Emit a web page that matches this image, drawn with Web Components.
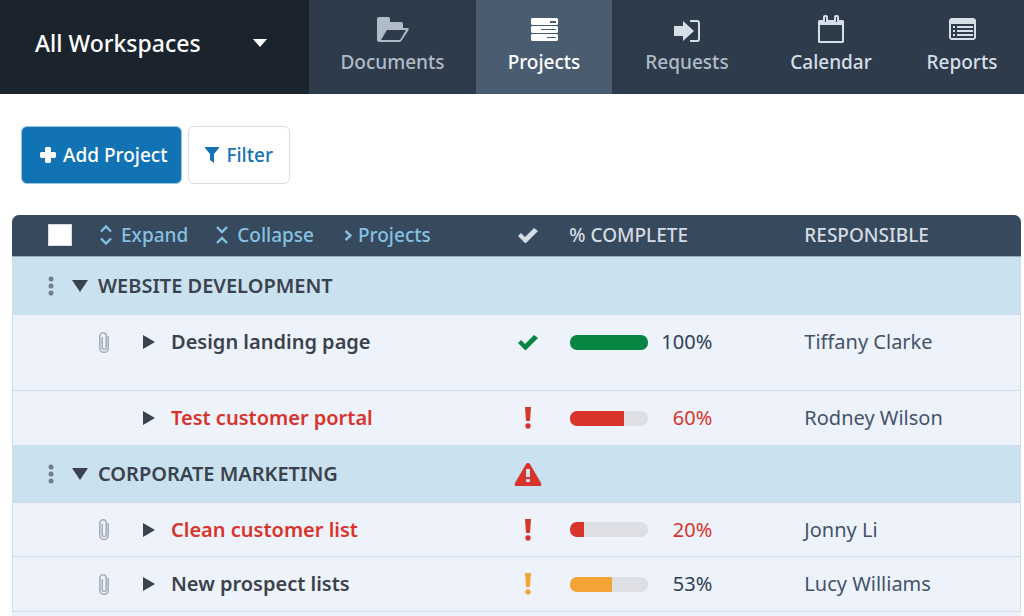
<!DOCTYPE html>
<html lang="en">
<head>
<meta charset="utf-8">
<title>Projects</title>
<style>
  body { display: flex; flex-direction: column; min-height: 100vh; margin: 0; background: #fff; font-family: "Noto Sans", "Open Sans", sans-serif; }
  main { display: flex; flex: 1; flex-direction: column; }
  project-table { flex: 1; }
</style>
</head>
<body>
<app-header></app-header>
<main>
  <project-toolbar></project-toolbar>
  <project-table></project-table>
</main>

<script>
const ICONS = {
  caret: [14, 8, '<path d="M0 0h14L7 8z"/>'],
  folder: [32, 25, '<path fill-rule="evenodd" d="M2 0h9q2 0 2 2v3h11q2 0 2 2v4h4q3 0 1 3l-6 9q-1 2-3 2H2q-2 0-2-2V2Q0 0 2 0zM10 13L4 23h19l6-10z"/>'],
  stack: [27, 23, '<path fill-rule="evenodd" d="M1 0h25l1 1v5l-1 1H1L0 6V1zM19 3v2h6V3zM1 8h25l1 1v5l-1 1H1l-1-1V9zM10 11v1h15v-1zM1 16h25l1 1v5l-1 1H1l-1-1v-5zM16 19v1h9v-1z"/>'],
  request: [26, 28, '<g fill="#d5dfe8" stroke="#d5dfe8"><path stroke="none" d="M0 11h9V6l11 10-11 10v-5H0z"/><path d="M16 6h7q2 0 2 2v16q0 2-2 2h-7" fill="none" stroke-width="2"/></g>'],
  calendar: [26, 28, '<path fill-rule="evenodd" d="M1 5h4V2q0-2 2-2h1q2 0 2 2v3h6V2q0-2 2-2h1q2 0 2 2v3h4l1 1v21l-1 1H1l-1-1V6zM7 2v5h1V2zM18 2v5h1V2zM2 10v16h22V10z"/>'],
  report: [27, 22, '<path fill-rule="evenodd" d="M2 0h23l2 2v18l-2 2H2l-2-2V2zM2 6v14h23V6z"/><path d="M4 8h2v2H4zM8 8h16v2H8zM4 12h2v2H4zM8 12h16v2H8zM4 16h2v2H4zM8 16h16v2H8z"/>'],
  plus: [16, 16, '<path d="M6 0h4l1 1v4h4l1 1v4l-1 1h-4v4l-1 1H6l-1-1v-4H1l-1-1V6l1-1h4V1z"/>'],
  funnel: [14, 16, '<path d="M0 0h14v1L9 7v9l-4-3V7L0 1z"/>'],
  expand: [12, 20, '<path d="M1 6.500l5-5 5 5M1 13.500l5 5 5-5" fill="none" stroke="currentColor" stroke-width="2.400"/>'],
  collapse: [12, 18, '<path d="M1 1l5 5 5-5M1 17l5-5 5 5" fill="none" stroke="currentColor" stroke-width="2.400"/>'],
  chevron: [8, 11, '<path d="M1.500 1l5 4.500-5 4.500" fill="none" stroke="currentColor" stroke-width="2.400"/>'],
  check: [20, 15, '<path d="M0 8l3-3 4 4 9-9 4 3L8 15H7z"/>'],
  dots: [6, 20, '<circle cx="3" cy="3" r="2.500"/><circle cx="3" cy="10" r="2.500"/><circle cx="3" cy="17" r="2.500"/>'],
  down: [16, 12, '<path d="M0 0h16L8 12z"/>'],
  right: [12, 14, '<path d="M0 0l12 7-12 7z"/>'],
  clip: [10, 21, '<path d="M9.200 4v12.200a4.200 4.200 0 0 1-8.400 0V4a3.200 3.200 0 0 1 6.400 0v11.500a2 2 0 0 1-4 0V5" fill="none" stroke="currentColor" stroke-width="1.600"/>'],
  alert: [6, 22, '<path d="M0 0h6l-1 14H1z"/><circle cx="3" cy="19" r="2.700"/>'],
  warning: [28, 23, '<path fill-rule="evenodd" d="M14 0q1 0 2 1l11 19q1 3-1 3H2q-2 0-1-3L12 1q1-1 2-1zM12 6v8h4V6zM12 16v3h4v-3z"/>']
};

class UiIcon extends HTMLElement {
  connectedCallback() {
    const [w, h, art] = ICONS[this.getAttribute('name')];
    const root = this.shadowRoot || this.attachShadow({ mode: 'open' });
    root.innerHTML = `<style>:host { display: inline-block; flex: none; } svg { display: block; fill: currentColor; }</style>
      <svg width="${w}" height="${h}" viewBox="0 0 ${w} ${h}" aria-hidden="true">${art}</svg>`;
  }
}

class NavItem extends HTMLElement {
  constructor() {
    super();
    this.attachShadow({ mode: 'open' });
  }
  connectedCallback() {
    this.shadowRoot.innerHTML = `<style>
      :host { display: block; color: #afbbc6; }
      :host([active]) { color: #fff; background: #4a5d70; }
      :host([bright]) { color: #d5dfe8; }
      a { display: flex; flex-direction: column; align-items: center; box-sizing: border-box; height: 100%;
          padding-top: 14px; color: inherit; text-decoration: none; font-size: 19px; line-height: 28px; font-weight: 500; }
      span { display: flex; align-items: center; justify-content: center; height: 30px; margin-bottom: 4px; }
    </style>
    <a href="#"><span><ui-icon name="${this.getAttribute('icon')}"></ui-icon></span><slot></slot></a>`;
  }
}

class AppHeader extends HTMLElement {
  constructor() {
    super();
    this.attachShadow({ mode: 'open' }).innerHTML = `<style>
      :host { display: block; background: #2d3b4b; }
      header, nav { display: grid; }
      header { grid-template-columns: 309fr 715fr; height: 94px; }
      nav { grid-template-columns: 167fr 136fr 150fr 138fr 124fr; }
      button { display: flex; align-items: center; justify-content: space-between; border: 0; margin: 0;
               padding: 0 42px 8px 35px; background: #1b242d; color: #fff; font: 500 23px/32px "Noto Sans", "Open Sans", sans-serif; }
    </style>
    <header>
      <button type="button">All Workspaces <ui-icon name="caret"></ui-icon></button>
      <nav>
        <nav-item icon="folder">Documents</nav-item>
        <nav-item icon="stack" active>Projects</nav-item>
        <nav-item icon="request">Requests</nav-item>
        <nav-item icon="calendar" bright>Calendar</nav-item>
        <nav-item icon="report" bright>Reports</nav-item>
      </nav>
    </header>`;
  }
}

class ActionButton extends HTMLElement {
  constructor() {
    super();
    this.attachShadow({ mode: 'open' });
  }
  connectedCallback() {
    this.shadowRoot.innerHTML = `<style>
      :host { display: block; }
      button { display: flex; align-items: center; gap: 7px; height: 58px; padding: 0 16px; border: 1px solid #dcdce6;
               border-radius: 6px; background: #fff; color: #1473b4; font: 500 19px/28px "Noto Sans", "Open Sans", sans-serif; }
      :host([primary]) button { padding: 0 14px 0 18px; border-color: #9cc4e0; background: #1173b4; color: #fff; }
    </style>
    <button type="button"><ui-icon name="${this.getAttribute('icon')}"></ui-icon><slot></slot></button>`;
  }
}

class ProjectToolbar extends HTMLElement {
  constructor() {
    super();
    this.attachShadow({ mode: 'open' }).innerHTML = `<style>
      :host { display: flex; gap: 6px; padding: 32px 21px 31px; }
    </style>
    <action-button icon="plus" primary>Add Project</action-button>
    <action-button icon="funnel">Filter</action-button>`;
  }
}

class ProgressMeter extends HTMLElement {
  constructor() {
    super();
    this.attachShadow({ mode: 'open' });
  }
  connectedCallback() {
    const value = this.getAttribute('value');
    this.shadowRoot.innerHTML = `<style>
      :host { display: flex; align-items: center; }
      progress { appearance: none; display: block; width: 78px; height: 15px; border: 0; border-radius: 7px; overflow: hidden; background: #dedfe4; }
      progress::-webkit-progress-bar { background: #dedfe4; }
      progress::-webkit-progress-value { background: var(--bar); }
      label { display: contents; }
      span { width: 64px; text-align: right; }
    </style>
    <label><progress max="100" value="${this.getAttribute('fill')}"></progress><span>${value}%</span></label>`;
  }
}

const groupRow = (name, status) => `
  <tr class="group">
    <th scope="rowgroup"><div class="name">
      <button type="button" class="menu" aria-label="Group menu"><ui-icon name="dots"></ui-icon></button>
      <button type="button" class="toggle" aria-label="Collapse group"><ui-icon name="down"></ui-icon></button>${name}
    </div></th>
    <td class="status late">${status ? `<ui-icon name="${status}"></ui-icon>` : ''}</td><td></td><td></td>
  </tr>`;

const taskRow = t => `
  <tr class="task ${t.kind || ''}">
    <th scope="row"><div class="name">
      <span class="clip">${t.clip ? '<ui-icon name="clip"></ui-icon>' : ''}</span>
      <button type="button" class="toggle" aria-label="Expand task"><ui-icon name="right"></ui-icon></button>
      <span class="title">${t.name}</span>
    </div></th>
    <td class="status"><ui-icon name="${t.status}"></ui-icon></td>
    <td><progress-meter value="${t.value}" fill="${t.fill}"></progress-meter></td>
    <td class="person">${t.person}</td>
  </tr>`;

class ProjectTable extends HTMLElement {
  constructor() {
    super();
    this.attachShadow({ mode: 'open' }).innerHTML = `<style>
      :host { display: block; margin: 0 3px 0 12px; border-radius: 7px 7px 0 0; background: #eef2fa; color: #3a424d; }
      table { width: 100%; table-layout: fixed; border-collapse: separate; border-spacing: 0; font-size: 20px; line-height: 28px; }
      th, td { box-sizing: border-box; padding: 0; text-align: left; font-weight: 400; }
      .c-name { width: 48%; } .c-status { width: 64px; } .c-done { width: 234px; }
      thead th { height: 42px; padding-bottom: 1px; background: #37495c; color: #d5dce4; font-size: 19px; font-weight: 500; border-bottom: 1px solid #9aabb9; }
      thead th:first-child { border-top-left-radius: 7px; }
      thead th:last-child { border-top-right-radius: 7px; }
      .tools { display: flex; align-items: center; padding-left: 36px; }
      .tools button { display: flex; align-items: center; gap: 9px; color: #85c1e3; font-size: 19px; line-height: 28px; font-weight: 500; }
      .tools .expand { margin: 0 28px 0 28px; }
      .tools .crumb { gap: 6px; margin-left: 30px; }
      input { appearance: none; flex: none; width: 24px; height: 22px; margin: 0; background: #fff; border: 1px solid #d9dce6; }
      button { display: flex; border: 0; margin: 0; padding: 0; background: none; color: inherit; font-family: inherit; }
      tbody th, tbody td { border-bottom: 1px solid #cddce6; background: #eef2fa; }
      tbody th { border-left: 1px solid #cddfe9; }
      tbody td:last-child { border-right: 1px solid #cddfe9; }
      .group th, .group td { height: 57px; background: #cae2ef; }
      .group:first-child th, .group:first-child td { height: 58px; }
      .task th, .task td { height: 54px; }
      .roomy th, .roomy td { height: 76px; padding-bottom: 21px; }
      .roomy + .task th, .roomy + .task td, .task:last-child th, .task:last-child td { height: 55px; }
      .name { display: flex; align-items: center; font-weight: 600; }
      .menu { margin-left: 35px; color: #747d8b; }
      .group .toggle { margin: 0 10px 0 18px; }
      .clip { display: flex; width: 10px; margin-left: 86px; color: #a9afbb; }
      .task .toggle { margin: 0 16px 0 34px; }
      .status { text-align: center; }
      .status ui-icon { display: block; width: max-content; margin: 0 auto; }
      .done { --bar: #078542; } .done .status { color: #078542; }
      .late { --bar: #d9342b; color: #d9342b; }
      .late .title, .late progress-meter { color: #d9342b; }
      .late .toggle { color: #3a424d; }
      .soon { --bar: #f2a536; } .soon .status { color: #f2a536; }
      progress-meter { padding-left: 10px; color: #2c4056; }
      .person, .c-head-person { padding-left: 10px; }
      .c-head-done { padding-left: 9px; }
      .late .person, .person { color: #43536a; }
    </style>
    <table>
      <colgroup><col class="c-name"><col class="c-status"><col class="c-done"><col></colgroup>
      <thead><tr>
        <th><div class="tools">
          <input type="checkbox" aria-label="Select all">
          <button type="button" class="expand"><ui-icon name="expand"></ui-icon>Expand</button>
          <button type="button"><ui-icon name="collapse"></ui-icon>Collapse</button>
          <button type="button" class="crumb"><ui-icon name="chevron"></ui-icon>Projects</button>
        </div></th>
        <th class="status"><ui-icon name="check"></ui-icon></th>
        <th class="c-head-done">% COMPLETE</th>
        <th class="c-head-person">RESPONSIBLE</th>
      </tr></thead>
      <tbody>
        ${groupRow('WEBSITE DEVELOPMENT')}
        ${taskRow({ name: 'Design landing page', clip: true, status: 'check', value: 100, fill: 100, person: 'Tiffany Clarke', kind: 'done roomy' })}
        ${taskRow({ name: 'Test customer portal', status: 'alert', value: 60, fill: 69, person: 'Rodney Wilson', kind: 'late' })}
        ${groupRow('CORPORATE MARKETING', 'warning')}
        ${taskRow({ name: 'Clean customer list', clip: true, status: 'alert', value: 20, fill: 18, person: 'Jonny Li', kind: 'late' })}
        ${taskRow({ name: 'New prospect lists', clip: true, status: 'alert', value: 53, fill: 54, person: 'Lucy Williams', kind: 'soon' })}
      </tbody>
    </table>`;
  }
}

customElements.define('ui-icon', UiIcon);
customElements.define('nav-item', NavItem);
customElements.define('app-header', AppHeader);
customElements.define('action-button', ActionButton);
customElements.define('project-toolbar', ProjectToolbar);
customElements.define('progress-meter', ProgressMeter);
customElements.define('project-table', ProjectTable);
</script>
</body>
</html>
